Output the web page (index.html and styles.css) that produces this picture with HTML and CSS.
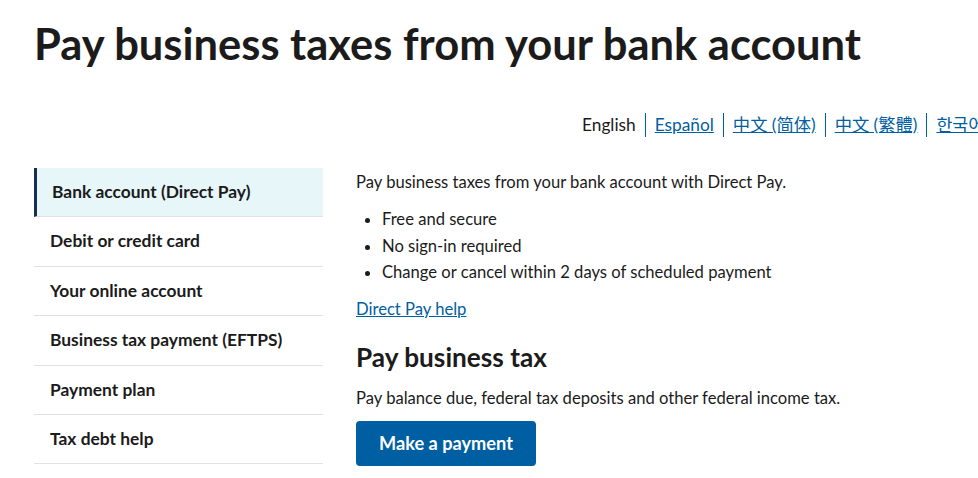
FILE: index.html
```html
<!DOCTYPE html>
<html lang="en">
<head>
<meta charset="utf-8">
<title>Pay business taxes from your bank account</title>
<link rel="stylesheet" href="styles.css">
</head>
<body>
<div class="page">
  <h1 class="title">Pay business taxes from your bank account</h1>
  <ul class="langs">
    <li class="lang current">English</li>
    <li class="lang"><a href="#">Español</a></li>
    <li class="lang"><a href="#">中文 (简体)</a></li>
    <li class="lang"><a href="#">中文 (繁體)</a></li>
    <li class="lang"><a href="#">한국어</a></li>
    <li class="lang"><a href="#">Русский</a></li>
    <li class="lang"><a href="#">Tiếng Việt</a></li>
  </ul>
  <div class="layout">
    <nav class="sidenav">
      <a class="navitem active" href="#">Bank account (Direct Pay)</a>
      <a class="navitem" href="#">Debit or credit card</a>
      <a class="navitem" href="#">Your online account</a>
      <a class="navitem" href="#">Business tax payment (EFTPS)</a>
      <a class="navitem" href="#">Payment plan</a>
      <a class="navitem" href="#">Tax debt help</a>
    </nav>
    <main class="content">
      <p class="intro">Pay business taxes from your bank account with Direct Pay.</p>
      <ul class="bullets">
        <li>Free and secure</li>
        <li>No sign-in required</li>
        <li>Change or cancel within 2 days of scheduled payment</li>
      </ul>
      <p class="help"><a href="#">Direct Pay help</a></p>
      <h2 class="subtitle">Pay business tax</h2>
      <p class="desc">Pay balance due, federal tax deposits and other federal income tax.</p>
      <a class="button" href="#">Make a payment</a>
    </main>
  </div>
</div>
</body>
</html>
```

FILE: styles.css
```css
html, body {
  overflow: hidden;
}
body {
  margin: 0;
  background: #ffffff;
  color: #1b1b1b;
  font-family: "Lato", "Noto Sans CJK SC", "Noto Sans CJK KR", sans-serif;
  font-size: 16.6px;
}
.page {
  padding: 0 0 0 34px;
}
.title {
  margin: 0;
  padding-top: 18px;
  font-size: 43.5px;
  line-height: 50px;
  font-weight: 700;
  color: #1b1b1b;
}
.langs {
  list-style: none;
  margin: 45px 0 0 548px;
  padding: 0;
  display: flex;
  white-space: nowrap;
  height: 24px;
}
.lang {
  padding: 0 9px;
  border-left: 1px solid #005ea2;
  line-height: 24px;
  font-size: 17.3px;
}
.lang.current {
  border-left: none;
  padding-left: 0;
  color: #1b1b1b;
}
.lang a {
  color: #005ea2;
  text-decoration: underline;
}
.layout {
  display: flex;
  gap: 33px;
  margin-top: 31px;
}
.sidenav {
  width: 289px;
  flex: none;
  display: flex;
  flex-direction: column;
}
.navitem {
  display: block;
  padding: 12px 16px;
  line-height: 24.4px;
  font-size: 17.4px;
  font-weight: 700;
  color: #1b1b1b;
  text-decoration: none;
  border-bottom: 1px solid #dfe1e2;
}
.navitem.active {
  background: #e7f6f8;
  border-left: 3px solid #162e51;
  padding-left: 15px;
}
.content {
  flex: 1;
}
.intro {
  margin: 2px 0 0;
  line-height: 24px;
}
.bullets {
  margin: 12px 0 0;
  padding-left: 26px;
}
.bullets li {
  line-height: 26.5px;
}
.help {
  margin: 11px 0 0;
  line-height: 24px;
}
.help a {
  color: #005ea2;
}
.subtitle {
  margin: 20px 0 0;
  font-size: 26.2px;
  line-height: 32px;
  font-weight: 700;
}
.desc {
  margin: 13px 0 0;
  line-height: 24px;
}
.button {
  display: inline-block;
  margin-top: 11px;
  width: 180px;
  height: 45px;
  line-height: 45px;
  text-align: center;
  background: #005ea2;
  color: #ffffff;
  font-weight: 700;
  font-size: 18.2px;
  text-decoration: none;
  border-radius: 4px;
}
```
